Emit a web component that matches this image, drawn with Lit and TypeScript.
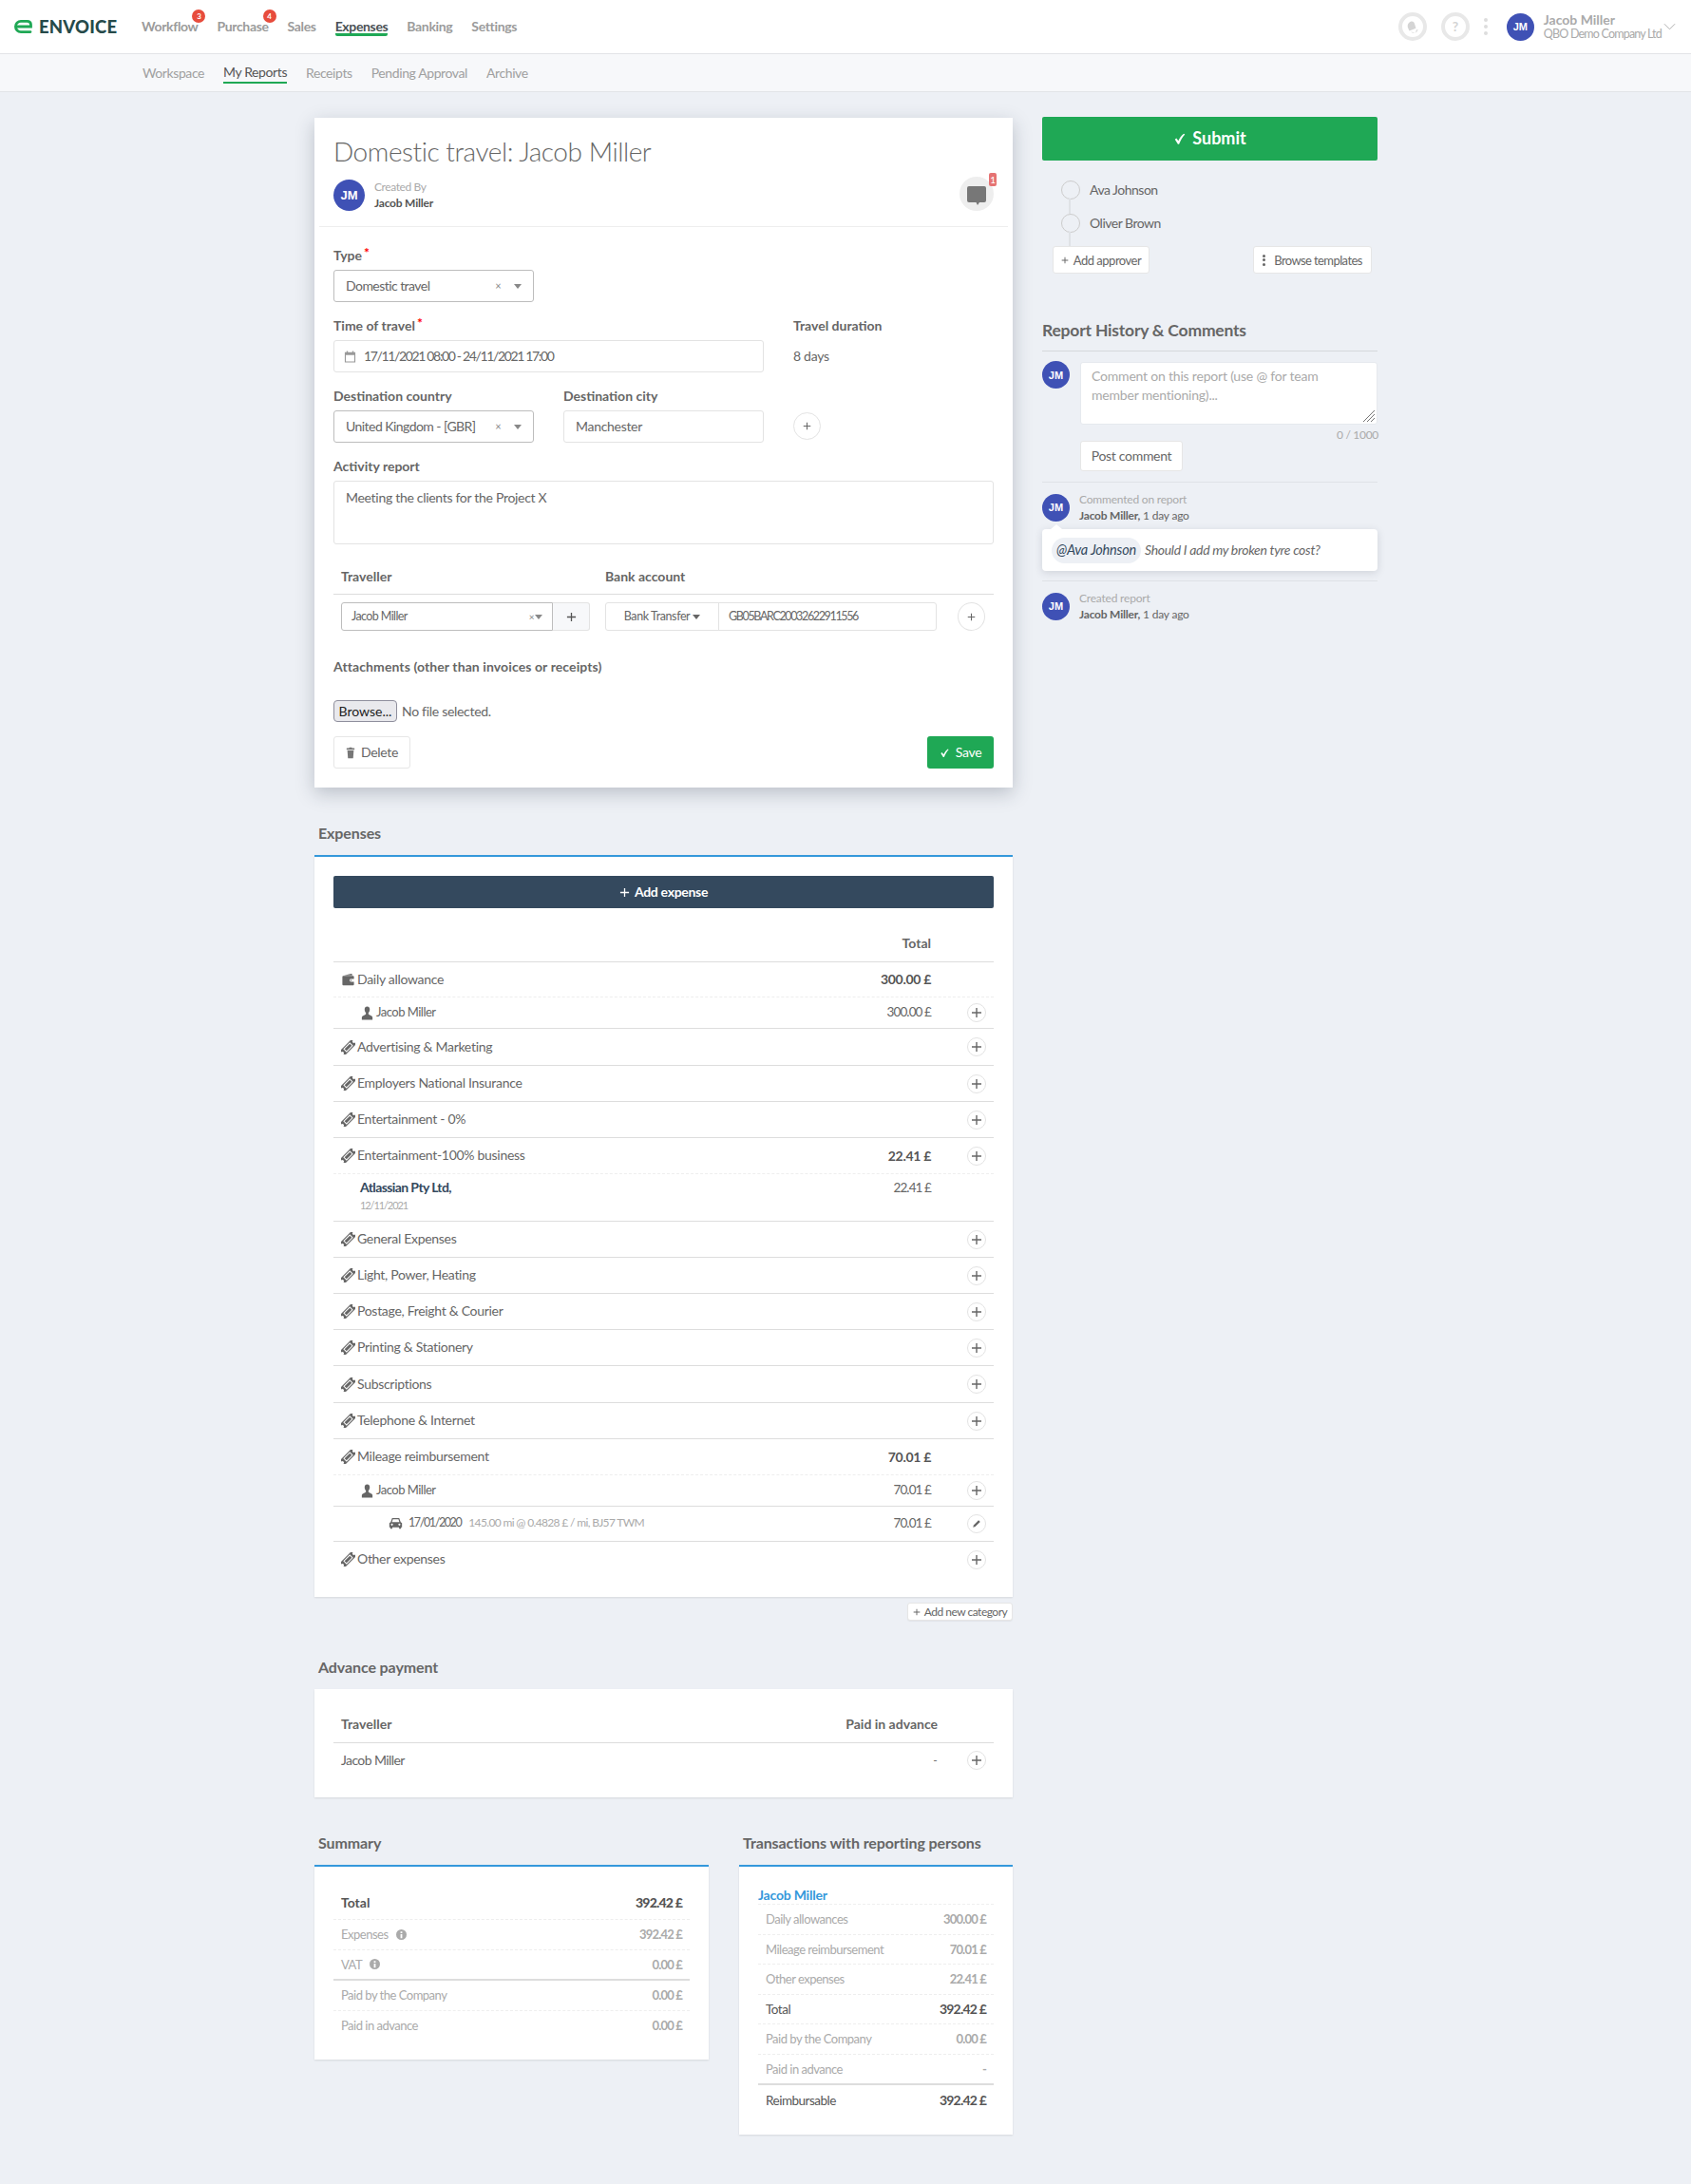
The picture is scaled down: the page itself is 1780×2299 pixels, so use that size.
import { LitElement, html, css, svg } from "lit";
import { customElement } from "lit/decorators.js";

const ico = (cls: string, vb: string, body: unknown) =>
  html`<svg class="ico ${cls}" viewBox="${vb}" fill="currentColor" aria-hidden="true">${body}</svg>`;
const tag = () => ico("tag", "0 0 16 16", svg`<g transform="rotate(-45 8 8)"><path d="M-1 4.200h18v2.300a1.500 1.500 0 0 0 0 3v2.300H-1V9.500a1.500 1.500 0 0 0 0-3z"/><rect x="2.800" y="5.400" width="10.400" height="5.200" fill="#fff"/><rect x="3.800" y="6.400" width="8.400" height="3.200"/></g>`);
const wallet = () => ico("wal", "0 0 16 16", svg`<path d="M3 2.800L11.500 1c.6-.1 1 .3 1 .8V3H3z"/><path fill-rule="evenodd" d="M2.500 3.500h11a1 1 0 0 1 1 1V7H11a1.500 1.500 0 0 0 0 3h3.500v3a1 1 0 0 1-1 1h-11a1 1 0 0 1-1-1V4.500a1 1 0 0 1 1-1zM11 7.800a.7.7 0 1 0 0 1.400.7.7 0 0 0 0-1.400z"/>`);
const user = () => ico("usr", "0 0 16 16", svg`<path d="M8 .5c1.800 0 2.900 1.300 2.900 3.100 0 1.700-.8 3-1.400 4.200-.3.700-.2 1.400.5 1.800l2.500 1.400c.8.400 1.500 1 1.500 1.800V15.500H2v-2.700c0-.8.7-1.400 1.500-1.800L6 9.600c.7-.4.800-1.100.5-1.800C5.900 6.600 5.100 5.300 5.100 3.600 5.100 1.800 6.200.5 8 .5z"/>`);
const car = () => ico("car", "0 0 18 16", svg`<path fill-rule="evenodd" d="M4.500 1.500h9l1.800 5 1.700 1.200V13h-1.200v2h-2.500v-2H4.700v2H2.200v-2H1V7.700l1.700-1.200zM5.500 3L4.300 6.500h9.400L12.500 3zM4.300 8.300a1.300 1.300 0 1 0 0 2.600 1.300 1.300 0 0 0 0-2.600zm9.400 0a1.300 1.300 0 1 0 0 2.600 1.300 1.300 0 0 0 0-2.600z"/>`);
const check = () => ico("chk", "0 0 16 16", svg`<path d="M2 8.800l1.800-1.400 2.300 3.200C7.800 7 9.800 4.300 12.700 2l1.300.8C10.900 6.400 8.800 10 7 14.500H5.600z"/>`);
const plusI = () => ico("pls", "0 0 12 12", svg`<path d="M5.300 1h1.400v4.300H11v1.400H6.700V11H5.300V6.700H1V5.300h4.300z"/>`);
const pencil = () => ico("pen", "0 0 12 12", svg`<path d="M8.500 1.500l2 2-6.200 6.200-2.800.8.800-2.800z"/>`);
const trash = () => ico("trs", "0 0 12 16", svg`<path d="M4.500 1h3l.5 1h3v2H1V2h3zM2 5h8l-.7 9.500c0 .3-.4.5-.7.500H3.400c-.3 0-.7-.2-.7-.5z"/>`);
const cal = () => ico("cal", "0 0 14 14", svg`<path fill-rule="evenodd" d="M3 .5h1.500V2h5V.5H11V2h2v11.500H1V2h2zM2.200 5v7.300h9.600V5z"/>`);
const info = () => ico("inf", "0 0 12 12", svg`<path fill-rule="evenodd" d="M6 0a6 6 0 1 1 0 12A6 6 0 0 1 6 0zM5 2.500v1.800h2V2.500zm0 3V10h2V5.500z"/>`);
const bell = () => ico("bel", "0 0 16 16", svg`<path d="M5.500 2c2.500-1 4.500.5 5 3l1.500 5-8 3-2-4.500C1.500 6 3 3 5.500 2z"/><path d="M6 13.500a2.500 2.500 0 0 0 6-1.500l2.500-1-1 3c-2 2-5 2-7.500-.5z" opacity=".8"/>`);
const bubble = () => ico("bub", "0 0 22 24", svg`<path d="M3 2h16a2 2 0 0 1 2 2v13a2 2 0 0 1-2 2h-5l-2 3-1.500-3H3a2 2 0 0 1-2-2V4a2 2 0 0 1 2-2z"/>`);
const chev = () => html`<svg class="chev" viewBox="0 0 14 8" fill="none" stroke="currentColor" stroke-width="1" aria-hidden="true"><path d="M1 1l6 6 6-6"/></svg>`;
const caret = () => html`<span class="caret"></span>`;
const pbtn = (icon = plusI()) => html`<span class="pbtn">${icon}</span>`;

type Row = { k: string; label?: string; amt?: string; strong?: boolean; act?: boolean; dash?: boolean };
const rows: Row[] = [
  { k: "wallet", label: "Daily allowance", amt: "300.00 £", strong: true, dash: true },
  { k: "person", label: "Jacob Miller", amt: "300.00 £", act: true },
  { k: "cat t39", label: "Advertising & Marketing", act: true },
  { k: "cat", label: "Employers National Insurance", act: true },
  { k: "cat", label: "Entertainment - 0%", act: true },
  { k: "cat", label: "Entertainment-100% business", amt: "22.41 £", strong: true, act: true, dash: true },
  { k: "atl" },
  { k: "cat", label: "General Expenses", act: true },
  { k: "cat", label: "Light, Power, Heating", act: true },
  { k: "cat", label: "Postage, Freight & Courier", act: true },
  { k: "cat", label: "Printing & Stationery", act: true },
  { k: "cat t39", label: "Subscriptions", act: true },
  { k: "cat", label: "Telephone & Internet", act: true },
  { k: "cat", label: "Mileage reimbursement", amt: "70.01 £", strong: true, dash: true },
  { k: "person m", label: "Jacob Miller", amt: "70.01 £", act: true },
  { k: "carrow" },
  { k: "cat last", label: "Other expenses", act: true },
];

@customElement("app-root")
export class AppRoot extends LitElement {
  static styles = css`
    :host { display: block; min-height: 2299px; background: #edf0f5; font-family: "Lato", "Noto Sans", sans-serif; font-size: 14px; line-height: 20px; color: #666; letter-spacing: -.3px; }
    * { box-sizing: border-box; }
    .ico { display: block; flex: none; }
    .top { height: 57px; background: #fff; border-bottom: 1px solid #e2e4e7; display: flex; align-items: center; }
    .logo { display: flex; align-items: center; gap: 7px; margin-left: 15px; width: 109px; font-size: 18.500px; font-weight: 900; color: #264a4a; letter-spacing: .2px; }
    .logo svg { width: 19px; height: 14px; }
    .nav { display: flex; gap: 20px; margin-left: 25px; font-size: 14px; font-weight: 700; color: #9b9b9b; align-self: flex-start; padding-top: 16px; letter-spacing: -.35px; }
    .nav span { position: relative; height: 22px; line-height: 24px; display: block; }
    .nav .on { color: #4a5155; border-bottom: 3px solid #1fa855; border-radius: 0 0 2px 2px; }
    .nbadge { position: absolute; right: -8px; top: -6px; width: 14px; height: 14px; border-radius: 50%; background: #e74c3c; color: #fff; font-size: 8px; line-height: 14px; text-align: center; font-style: normal; letter-spacing: 0; }
    .tright { margin-left: auto; display: flex; align-items: center; }
    .ring { width: 30px; height: 30px; border-radius: 50%; border: 4px solid #e8e8e8; color: #d4d4d4; display: flex; align-items: center; justify-content: center; font-weight: 700; font-size: 14px; margin-right: 15px; }
    .ring .bel { width: 14px; height: 14px; }
    .vd { width: 4px; display: flex; flex-direction: column; gap: 3px; margin: 0 20px 0 0; }
    .vd i { width: 4px; height: 4px; border-radius: 50%; background: #ddd; }
    .av { flex: none; width: 29px; height: 29px; border-radius: 50%; background: #3f51b5; color: #fff; font-family: "Liberation Sans", sans-serif; font-weight: 700; font-size: 11px; letter-spacing: 0; display: flex; align-items: center; justify-content: center; }
    .uinfo { margin-left: 10px; line-height: 15px; color: #aaa; font-size: 12.500px; white-space: nowrap; letter-spacing: -.8px; }
    .uinfo b { display: block; font-size: 14px; color: #aaa; letter-spacing: 0; }
    .chev { width: 13px; height: 8px; color: #aaa; margin: 0 16px 0 2px; }
    .sub { height: 40px; background: #f7f8fa; border-bottom: 1px solid #e2e4e7; display: flex; align-items: center; gap: 20px; padding-left: 150px; font-size: 14px; color: #a0a0a0; letter-spacing: -.4px; }
    .sub .on { color: #555; border-bottom: 2px solid #1fa855; height: 22px; margin-top: 1px; }
    .sub span { height: 20px; display: block; }

    .main { display: flex; gap: 31px; padding: 26px 0 0 331px; }
    .lc { width: 735px; flex: none; }
    .rc { width: 353px; flex: none; }
    .card { background: #fff; box-shadow: 0 1px 2px rgba(0,0,0,.1); }
    .blue { border-top: 2px solid #3498db; }
    .hero { margin-top: 1px; height: 705px; box-shadow: 0 6px 18px rgba(40,50,70,.25); }
    .hhead { height: 115px; margin: 0 5px; padding: 19px 15px 0; border-bottom: 1px solid #eee; }
    h1 { margin: 0; font-weight: 300; font-size: 28px; line-height: 32px; color: #666; letter-spacing: -.45px; }
    .by { display: flex; align-items: center; margin-top: 13px; position: relative; font-size: 12px; line-height: 17px; }
    .by .av { width: 33px; height: 33px; font-size: 13px; margin-right: 10px; }
    .by small { display: block; font-size: 12px; color: #aaa; letter-spacing: -.4px; }
    .by b { display: block; color: #555; letter-spacing: -.2px; }
    .cbtn { position: absolute; right: 0; top: -2px; width: 36px; height: 36px; border-radius: 50%; background: #eee; color: #777; display: flex; align-items: center; justify-content: center; }
    .cbtn .bub { width: 22px; height: 24px; margin-top: 3px; }
    .cnt { position: absolute; right: -3px; top: -4px; width: 8px; height: 14px; background: #e57373; color: #fff; border-radius: 2px; font-size: 10px; line-height: 14px; text-align: center; }
    .form { padding: 20px 20px 0; display: grid; grid-template-columns: 211px 211px 211px; column-gap: 31px; row-gap: 15px; }
    .fld { display: flex; flex-direction: column; gap: 5px; }
    .w2 { grid-column: span 2; }
    .w3 { grid-column: span 3; }
    label { font-weight: 700; height: 20px; color: #666; display: block; white-space: nowrap; letter-spacing: 0; }
    label em { color: #f00; font-style: normal; position: relative; top: -3px; margin-left: 2px; }
    .ctl { height: 34px; border: 1px solid #e3e3e3; border-radius: 3px; display: flex; align-items: center; padding: 0 12px; background: #fff; }
    .sel { border-color: #bdbdbd; position: relative; letter-spacing: -.55px; }
    .sel .x { margin-left: auto; font-size: 11px; color: #888; margin-right: 14px; }
    .caret { width: 0; height: 0; border: 4px solid transparent; border-top: 5px solid #888; border-bottom: 0; flex: none; }
    .dt { gap: 6px; padding-left: 10px; letter-spacing: -1.350px; }
    .dt .cal { width: 13px; height: 13px; color: #999; margin-right: 2px; }
    .val { height: 34px; display: flex; align-items: center; }
    .pbtn { flex: none; width: 20px; height: 20px; border-radius: 50%; border: 1px solid #e3e3e3; background: #fff; color: #666; display: flex; align-items: center; justify-content: center; }
    .pbtn .pls { width: 12px; height: 12px; }
    .pbtn .pen { width: 10px; height: 10px; }
    .pwrap { height: 33px; display: flex; align-items: center; }
    .pbig { width: 29px; height: 29px; }
    .pbig .pls { width: 9px; height: 9px; }
    .ta { height: 67px; border: 1px solid #e3e3e3; border-radius: 3px; padding: 7px 12px; }
    .trav { margin: 24px 20px 0; }
    .trh { display: flex; height: 29px; border-bottom: 1px solid #ddd; padding-left: 8px; font-weight: 700; letter-spacing: 0; }
    .trh span:first-child { width: 278px; }
    .trr { display: flex; padding: 8px 0 0 8px; font-size: 13px; height: 39px; }
    .tsel { width: 223px; height: 30px; border: 1px solid #bdbdbd; border-radius: 3px 0 0 3px; display: flex; align-items: center; padding: 0 10px; font-size: 12.500px; letter-spacing: -.6px; }
    .tsel .x { margin-left: auto; font-size: 10px; color: #888; margin-right: 1px; }
    .tadd { width: 39px; height: 30px; background: #f7f8fa; border: 1px solid #e3e3e3; border-left: 0; border-radius: 0 3px 3px 0; display: flex; align-items: center; justify-content: center; color: #555; }
    .tadd .pls { width: 11px; height: 11px; }
    .bank { width: 349px; height: 30px; margin-left: 16px; border: 1px solid #e3e3e3; border-radius: 3px; display: flex; align-items: center; }
    .bt { width: 119px; height: 100%; border-right: 1px solid #e3e3e3; display: flex; align-items: center; justify-content: center; gap: 3px; font-size: 12.500px; letter-spacing: -.4px; }
    .bt .caret { border-top-color: #666; }
    .bv { padding-left: 10px; font-size: 12.500px; letter-spacing: -1.350px; }
    .tp { margin-left: 22px; width: 29px; height: 30px; }
    .att { margin: 27px 20px 0; font-weight: 700; letter-spacing: .1px; }
    .file { margin: 25px 20px 0; display: flex; align-items: center; height: 23px; gap: 5px; }
    .browse { width: 67px; height: 23px; border: 1px solid #8f8f9d; background: #e9e9ed; border-radius: 4px; color: #222; font: inherit; padding: 0; letter-spacing: 0; }
    .acts { margin: 15px 20px 0; display: flex; justify-content: space-between; }
    .btn { border: 1px solid #e6e6e6; border-radius: 3px; background: #fff; display: flex; align-items: center; justify-content: center; color: #666; white-space: nowrap; }
    .del { width: 81px; height: 34px; gap: 6px; }
    .del .trs { width: 10px; height: 15px; color: #777; }
    .save { width: 70px; height: 34px; background: #1fa855; border: 0; color: #fff; gap: 6px; }
    .save .chk { width: 11px; height: 11px; }
    h2 { margin: 36px 0 11px; padding-left: 4px; font-size: 16px; line-height: 24px; font-weight: 700; color: #666; white-space: nowrap; letter-spacing: -.1px; }
    .addc + h2 { margin-top: 37px; }
    .exp { padding: 20px 20px 21px; }
    .addx { height: 34px; background: #34495e; color: #fff; border-radius: 2px; display: flex; align-items: center; justify-content: center; gap: 5px; font-weight: 700; }
    .addx .pls { width: 11px; height: 11px; }
    .xh { height: 57px; border-bottom: 1px solid #ddd; display: flex; align-items: flex-end; justify-content: flex-end; padding: 0 66px 9px 0; font-weight: 700; letter-spacing: 0; }
    .row { display: flex; align-items: center; height: 38px; border-bottom: 1px solid #ddd; padding-left: 8px; }
    .row.t39 { height: 39px; }
    .row.wallet { height: 37px; }
    .row.cat > span:nth-child(2) { margin-bottom: 1px; }
    .row.person { height: 33px; padding-left: 28px; font-size: 13px; letter-spacing: -.5px; }
    .row.person > span:not(.a):not(.ic) { margin-bottom: 3px; }
    .row.last { border-bottom: 0; height: 37px; }
    .row.dash { border-bottom: 1px dashed #eee; }
    .row .ic { width: 17px; display: flex; color: #666; }
    .ic .ico { width: 15px; height: 15px; }
    .row .amt { margin-left: auto; width: 100px; text-align: right; flex: none; font-size: 13.500px; letter-spacing: -.9px; }
    .row b.amt { color: #555; font-size: 14px; letter-spacing: -.3px; }
    .row .a { width: 66px; height: 20px; flex: none; display: flex; justify-content: flex-end; padding-right: 8px; }
    .row.atl { height: 50px; align-items: flex-start; padding: 5px 0 0 28px; line-height: 18px; }
    .row.atl b { color: #34495e; display: block; letter-spacing: -.6px; }
    .row.atl small { display: block; font-size: 11px; color: #aaa; margin-top: 1px; letter-spacing: -1.100px; }
    .row.carrow { height: 37px; padding-left: 58px; font-size: 12.500px; letter-spacing: -1.400px; }
    .row.carrow > span:not(.a) { margin-bottom: 2px; }
    .row.carrow .ic { width: 21px; margin-bottom: 0; }
    .row.carrow small { color: #aaa; font-size: 12px; margin: 0 0 2px 8px; letter-spacing: -.65px; }
    .addc { margin: 6px 0 0 auto; width: 111px; height: 19px; font-size: 12px; gap: 4px; box-shadow: 0 1px 1px rgba(0,0,0,.05); letter-spacing: -.5px; }
    .addc .pls { width: 8px; height: 8px; }
    .adv { padding: 0 20px 0; height: 114px; }
    .advh { height: 57px; display: flex; align-items: flex-end; border-bottom: 1px solid #ddd; padding: 0 59px 9px 8px; font-weight: 700; justify-content: space-between; letter-spacing: 0; }
    .advr { height: 36px; display: flex; align-items: center; padding-left: 8px; letter-spacing: -.6px; }
    .advr .pbtn { margin-right: 8px; }
    .adv .advr .d { margin-left: auto; margin-right: 32px; font-size: 12px; }
    .bot { display: flex; gap: 32px; align-items: flex-start; }
    .bot > div:first-child { width: 415px; flex: none; }
    .bot > div:last-child { width: 288px; flex: none; }
    .sm { padding: 20px 20px; }
    .s { display: flex; align-items: center; justify-content: space-between; padding: 0 8px; border-bottom: 1px dashed #eee; color: #aaa; height: 31.500px; font-size: 13px; letter-spacing: -.5px; }
    .s b { color: #aaa; white-space: nowrap; letter-spacing: -.8px; }
    .s > span { display: flex; align-items: center; gap: 8px; }
    .s .inf { width: 11px; height: 11px; color: #aaa; }
    .s.h0 { height: 36px; color: #555; font-weight: 700; font-size: 14px; letter-spacing: 0; }
    .s.h0 b { color: #555; letter-spacing: -.8px; }
    .s.dk { color: #555; font-size: 13.500px; }
    .s.dk b { color: #555; font-size: 14px; }
    .s.thick { border-bottom: 2px solid #ddd; height: 32.500px; }
    .s.end { border-bottom: 0; }
    .tname { color: #3498db; font-weight: 700; height: 20px; border-bottom: 1px dashed #eee; line-height: 20px; letter-spacing: -.2px; }
    .tr { padding: 20px 20px 20px; }
    .submit { height: 46px; background: #1fa855; color: #fff; border-radius: 2px; font-size: 18px; font-weight: 700; display: flex; align-items: center; justify-content: center; gap: 6px; letter-spacing: 0; padding-bottom: 2px; }
    .submit .chk { width: 14px; height: 14px; margin-top: 2px; }
    .apps { margin-top: 13px; padding-left: 20px; letter-spacing: -.5px; }
    .ap { height: 35px; display: flex; align-items: center; gap: 10px; position: relative; }
    .ap i { width: 20px; height: 20px; border: 1px solid #ccc; border-radius: 50%; }
    .ap::after { content: ""; position: absolute; left: 8px; top: 27px; width: 2px; height: 16px; background: #dfe2e6; }
    .apb { display: flex; justify-content: space-between; padding: 0 6px 0 11px; margin-top: 7px; font-size: 13px; letter-spacing: -.5px; }
    .apb .btn { height: 29px; gap: 5px; position: relative; }
    .apb .pls { width: 8px; height: 8px; }
    .aa { width: 102px; }
    .bt2 { width: 125px; letter-spacing: -.6px; }
    .dots { display: flex; flex-direction: column; gap: 1.500px; margin-right: 4px; }
    .dots i { width: 3px; height: 3px; background: #666; border-radius: 50%; display: block; }
    h3 { margin: 48px 0 0; font-size: 17.500px; line-height: 24px; padding-bottom: 9px; font-weight: 700; color: #666; border-bottom: 1px solid #d5d8dc; white-space: nowrap; letter-spacing: -.2px; }
    .comp { display: flex; gap: 11px; margin-top: 11px; }
    .comp .av { margin-top: -1px; }
    .cright { width: 313px; }
    .cta { height: 66px; background: #fff; border: 1px solid #e6e9ee; border-radius: 3px; padding: 4px 11px; color: #aaa; position: relative; line-height: 20px; letter-spacing: -.2px; }
    .hatch { position: absolute; right: 1px; bottom: 1px; width: 14px; height: 14px; }
    .count { text-align: right; font-size: 12px; color: #aaa; line-height: 12px; padding-top: 5px; height: 17px; margin-right: -1px; }
    .post { width: 108px; height: 32px; }
    .ent { border-top: 1px solid #dfe2e6; margin-top: 11px; padding-top: 9px; }
    .eh { display: flex; gap: 10px; align-items: center; font-size: 12px; line-height: 17px; letter-spacing: -.2px; }
    .eh small { display: block; font-size: 12px; color: #aaa; }
    .eh b { color: #666; }
    .bub2 { margin-top: 6px; height: 44px; background: #fff; border-radius: 4px; box-shadow: 0 2px 8px rgba(40,50,70,.15); display: flex; align-items: center; padding-left: 10px; gap: 4px; font-style: italic; position: relative; }
    .bub2::before { content: ""; position: absolute; left: 9px; top: -5px; border: 6px solid transparent; border-top: 0; border-bottom: 5px solid #fff; }
    .ment { height: 27px; padding: 0 5px; border-radius: 14px; background: #edf0f5; color: #34495e; display: flex; align-items: center; white-space: nowrap; font-size: 14.500px; letter-spacing: -.2px; }
    .ent2 { margin-top: 10px; padding-top: 9px; }
  `;

  private row(r: Row) {
    if (r.k === "atl") return html`<div class="row atl"><div><b>Atlassian Pty Ltd,</b><small>12/11/2021</small></div><span class="amt">22.41 £</span><span class="a"></span></div>`;
    if (r.k === "carrow") return html`<div class="row carrow"><span class="ic">${car()}</span><span>17/01/2020</span><small>145.00 mi @ 0.4828 £ / mi, BJ57 TWM</small><span class="amt">70.01 £</span><span class="a">${pbtn(pencil())}</span></div>`;
    const icon = r.k.startsWith("wallet") ? wallet() : r.k.startsWith("person") ? user() : tag();
    return html`<div class="row ${r.k} ${r.dash ? "dash" : ""}"><span class="ic">${icon}</span><span>${r.label}</span>
      ${r.strong ? html`<b class="amt">${r.amt}</b>` : html`<span class="amt">${r.amt ?? ""}</span>`}
      <span class="a">${r.act ? pbtn() : ""}</span></div>`;
  }

  render() {
    return html`
      <div class="top">
        <div class="logo"><svg viewBox="0 0 19 14" fill="none" stroke="#1fa855" stroke-width="2.800" stroke-linecap="round" aria-hidden="true"><path d="M3 7h14.500V5c0-2.200-1.500-3.600-3.800-3.600H7a5.600 5.600 0 0 0 0 11.200h10"/></svg><span>ENVOICE</span></div>
        <div class="nav">
          <span>Workflow<i class="nbadge">3</i></span><span>Purchase<i class="nbadge">4</i></span><span>Sales</span><span class="on">Expenses</span><span>Banking</span><span>Settings</span>
        </div>
        <div class="tright">
          <div class="ring">${bell()}</div><div class="ring">?</div>
          <div class="vd"><i></i><i></i><i></i></div>
          <div class="av">JM</div>
          <div class="uinfo"><b>Jacob Miller</b>QBO Demo Company Ltd</div>
          ${chev()}
        </div>
      </div>
      <div class="sub"><span>Workspace</span><span class="on">My Reports</span><span>Receipts</span><span>Pending Approval</span><span>Archive</span></div>
      <div class="main">
        <div class="lc">
          <div class="card hero">
            <div class="hhead">
              <h1>Domestic travel: Jacob Miller</h1>
              <div class="by"><div class="av">JM</div><div><small>Created By</small><b>Jacob Miller</b></div>
                <div class="cbtn">${bubble()}<span class="cnt">1</span></div></div>
            </div>
            <div class="form">
              <div class="fld"><label>Type<em>*</em></label><div class="ctl sel">Domestic travel<span class="x">×</span>${caret()}</div></div>
              <div class="w2"></div>
              <div class="fld w2"><label>Time of travel<em>*</em></label><div class="ctl dt">${cal()}17/11/2021 08:00 - 24/11/2021 17:00</div></div>
              <div class="fld"><label>Travel duration</label><div class="val">8 days</div></div>
              <div class="fld"><label>Destination country</label><div class="ctl sel">United Kingdom - [GBR]<span class="x">×</span>${caret()}</div></div>
              <div class="fld"><label>Destination city</label><div class="ctl">Manchester</div></div>
              <div class="fld"><label>&nbsp;</label><div class="pwrap"><span class="pbtn pbig">${plusI()}</span></div></div>
              <div class="fld w3"><label>Activity report</label><div class="ta">Meeting the clients for the Project X</div></div>
            </div>
            <div class="trav">
              <div class="trh"><span>Traveller</span><span>Bank account</span></div>
              <div class="trr">
                <div class="tsel">Jacob Miller<span class="x">×</span>${caret()}</div><div class="tadd">${plusI()}</div>
                <div class="bank"><div class="bt">Bank Transfer${caret()}</div><div class="bv">GB05BARC20032622911556</div></div>
                <span class="pbtn pbig tp">${plusI()}</span>
              </div>
            </div>
            <div class="att">Attachments (other than invoices or receipts)</div>
            <div class="file"><button class="browse">Browse...</button><span>No file selected.</span></div>
            <div class="acts"><div class="btn del">${trash()}Delete</div><div class="btn save">${check()}Save</div></div>
          </div>

          <h2>Expenses</h2>
          <div class="card blue exp">
            <div class="addx">${plusI()}Add expense</div>
            <div class="xh">Total</div>
            ${rows.map((r) => this.row(r))}
          </div>
          <div class="btn addc">${plusI()}Add new category</div>

          <h2>Advance payment</h2>
          <div class="card adv">
            <div class="advh"><span>Traveller</span><span>Paid in advance</span></div>
            <div class="advr"><span>Jacob Miller</span><span class="d">-</span>${pbtn()}</div>
          </div>

          <div class="bot">
            <div>
              <h2>Summary</h2>
              <div class="card blue sm">
                <div class="s h0"><span>Total</span><b>392.42 £</b></div>
                <div class="s"><span>Expenses ${info()}</span><b>392.42 £</b></div>
                <div class="s thick"><span>VAT ${info()}</span><b>0.00 £</b></div>
                <div class="s"><span>Paid by the Company</span><b>0.00 £</b></div>
                <div class="s end"><span>Paid in advance</span><b>0.00 £</b></div>
              </div>
            </div>
            <div>
              <h2>Transactions with reporting persons</h2>
              <div class="card blue tr">
                <div class="tname">Jacob Miller</div>
                <div class="s"><span>Daily allowances</span><b>300.00 £</b></div>
                <div class="s"><span>Mileage reimbursement</span><b>70.01 £</b></div>
                <div class="s"><span>Other expenses</span><b>22.41 £</b></div>
                <div class="s dk"><span>Total</span><b>392.42 £</b></div>
                <div class="s"><span>Paid by the Company</span><b>0.00 £</b></div>
                <div class="s thick"><span>Paid in advance</span><b>-</b></div>
                <div class="s end dk"><span>Reimbursable</span><b>392.42 £</b></div>
              </div>
            </div>
          </div>
        </div>

        <div class="rc">
          <div class="submit">${check()}Submit</div>
          <div class="apps">
            <div class="ap"><i></i>Ava Johnson</div>
            <div class="ap"><i></i>Oliver Brown</div>
          </div>
          <div class="apb">
            <div class="btn aa">${plusI()}Add approver</div>
            <div class="btn bt2"><span class="dots"><i></i><i></i><i></i></span>Browse templates</div>
          </div>
          <h3>Report History &amp; Comments</h3>
          <div class="comp">
            <div class="av">JM</div>
            <div class="cright">
              <div class="cta">Comment on this report (use @ for team member mentioning)...
                <svg class="hatch" viewBox="0 0 14 14" fill="none" stroke="#777" stroke-width="1" aria-hidden="true"><path d="M1 13L13 1M5 13l8-8M9 13l4-4"/></svg>
              </div>
              <div class="count">0 / 1000</div>
              <div class="btn post">Post comment</div>
            </div>
          </div>
          <div class="ent">
            <div class="eh"><div class="av">JM</div><div><small>Commented on report</small><b>Jacob Miller,</b> 1 day ago</div></div>
            <div class="bub2"><span class="ment">@Ava Johnson</span> <span>Should I add my broken tyre cost?</span></div>
          </div>
          <div class="ent ent2">
            <div class="eh"><div class="av">JM</div><div><small>Created report</small><b>Jacob Miller,</b> 1 day ago</div></div>
          </div>
        </div>
      </div>
    `;
  }
}
